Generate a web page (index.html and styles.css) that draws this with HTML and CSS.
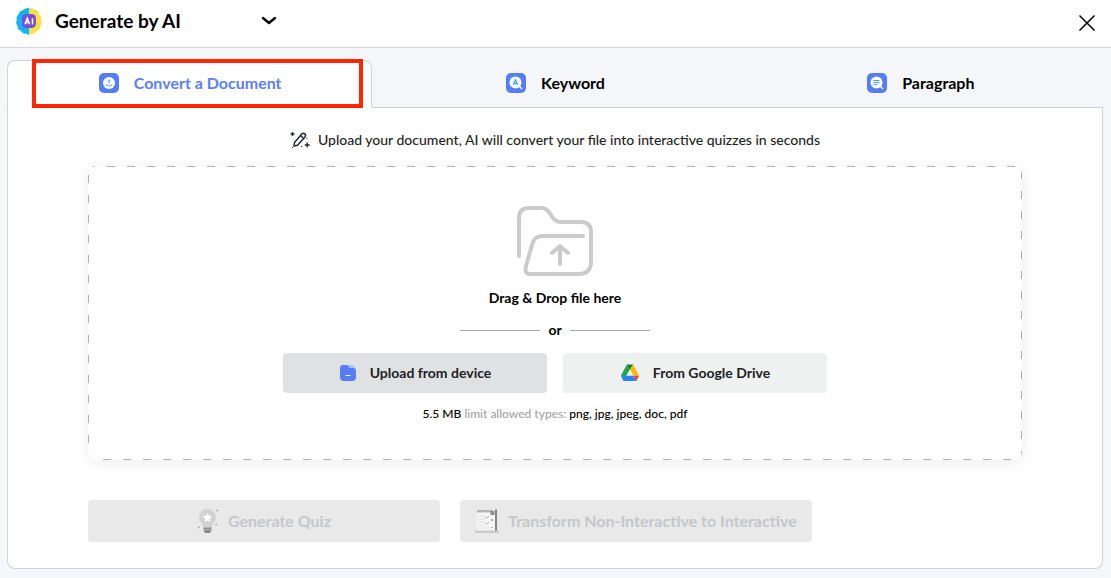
FILE: index.html
```html
<!DOCTYPE html>
<html lang="en">
<head>
<meta charset="utf-8">
<meta name="viewport" content="width=device-width, initial-scale=1">
<title>Generate by AI</title>
<link rel="stylesheet" href="styles.css">
</head>
<body>
<header class="topbar">
  <button class="mode" type="button" aria-haspopup="listbox">
    <svg class="mode-logo" width="28" height="28" viewBox="0 0 28 28" aria-hidden="true">
      <path d="M14 .8 10.500 1.500 8 3 5 4.500 3.500 7.500 1.500 10 1.800 13 1 16l1.500 3 .5 3 3 2 2 2.500 3.500.2L14 28z" fill="#12b5fb"/>
      <path d="m14 .8 3.500.7L20 3l3 1.500L24.500 8l2 2.500-.3 3 .8 3-1.700 3-.8 3.200-3 1.300-2 2.500-3.500.5L14 28z" fill="#fde047"/>
      <path d="M20 3.500 23 5" stroke="#f6b74a"/>
      <rect x="7" y="7" width="14" height="14" rx="4.500" fill="#7650d8"/>
      <path d="m10 17.300 2.300-6 2.300 6M11 15.400h2.700M17.500 11.200v6.200" fill="none" stroke="#fff" stroke-width="1.500"/>
    </svg>
    <span class="mode-name">Generate by AI</span>
    <svg width="16" height="10" viewBox="0 0 16 10" aria-hidden="true"><path d="m2 2 6 5 6-5" fill="none" stroke="#000" stroke-width="2.400" stroke-linecap="round" stroke-linejoin="round"/></svg>
  </button>
  <button class="close" type="button" aria-label="Close">
    <svg width="18" height="18" viewBox="0 0 18 18" aria-hidden="true"><path d="m1.500 1.500 15 15m0-15-15 15" stroke="#000" stroke-width="1.500"/></svg>
  </button>
</header>

<main class="workspace">
  <div class="tabs" role="tablist">
    <button class="tab tab-active" type="button" role="tab" aria-selected="true">
      <svg width="22" height="22" viewBox="0 0 22 22" aria-hidden="true"><rect x="1" y="1" width="20" height="20" rx="5" fill="#557df8"/><circle cx="11" cy="11" r="6" fill="#fff"/><path d="M11 12V7.800M9.200 9.500 11 7.700l1.800 1.800M8.200 12v1.700h5.600V12" fill="none" stroke="#59bdf5"/></svg>
      <span>Convert a Document</span>
    </button>
    <button class="tab" type="button" role="tab" aria-selected="false">
      <svg width="22" height="22" viewBox="0 0 22 22" aria-hidden="true"><rect x="1" y="1" width="20" height="20" rx="5" fill="#557df8"/><circle cx="10.500" cy="10.500" r="6" fill="#fff"/><path d="m14.500 14.500 2.500 2.500" stroke="#fff" stroke-width="1.500"/><path d="m8.300 13 2.200-5.500 2.200 5.500M9.200 11.400h2.600" fill="none" stroke="#3aaaf2" stroke-width="1.200"/></svg>
      <span>Keyword</span>
    </button>
    <button class="tab" type="button" role="tab" aria-selected="false">
      <svg width="22" height="22" viewBox="0 0 22 22" aria-hidden="true"><rect x="1" y="1" width="20" height="20" rx="5" fill="#557df8"/><circle cx="10.500" cy="10.500" r="6" fill="#fff"/><path d="m14.500 14.500 2.500 2.500" stroke="#fff" stroke-width="1.500"/><path d="M7.500 8.500h6M7.500 10.600h6M7.500 12.700h4" stroke="#3aa0f2"/></svg>
      <span>Paragraph</span>
    </button>
    <div class="highlight"></div>
  </div>

  <section class="panel" role="tabpanel">
    <p class="intro">
      <svg width="20" height="18" viewBox="0 0 20 18" fill="none" stroke="#23283d" aria-hidden="true">
        <path d="m4.500 11.500 7.300-8.600q1.500-1.300 3 0t.2 3L7.500 14.200l-3.500.8zM10.500 4.500l3 2.700" stroke-width="1.500" stroke-linejoin="round"/>
        <path d="M2.500 1v4M.5 3h4M17.200 11.500v5M14.700 14h5" stroke-width="1.400"/>
        <path d="M2 16.500h1M11 15.500h1M16.500 7.500h1" stroke-width="1"/>
      </svg>
      <span>Upload your document, AI will convert your file into interactive quizzes in seconds</span>
    </p>

    <div class="dropzone">
      <svg width="80" height="74" viewBox="0 0 80 74" fill="none" stroke="#cbcbcb" stroke-width="4" stroke-linecap="round" stroke-linejoin="round" aria-hidden="true">
        <path d="M4 52V14Q4 4 14 4h12q5 0 8 4l4 6q3 4 8 4h20q10 0 10 10v29q0 13-12 13H15q-6 0-4-8l6-21q2-9 10-9h41"/>
        <path d="M45 60V42m-8 7 8-7 8 7"/>
      </svg>
      <strong class="drop-title">Drag &amp; Drop file here</strong>
      <div class="divider"><span>or</span></div>
      <div class="sources">
        <button class="source source-device" type="button">
          <svg width="18" height="18" viewBox="0 0 18 18" aria-hidden="true"><path d="M8 1h5q3 0 3 4H9z" fill="#a3c9ec"/><path d="M4 1h4l3 3h3q3 0 3 3v6q0 4-4 4H5q-4 0-4-4V4q0-3 3-3z" fill="#557df8"/><path d="M7 11.500h4" stroke="#fff" stroke-linecap="round"/></svg>
          <span>Upload from device</span>
        </button>
        <button class="source source-drive" type="button">
          <svg width="20" height="18" viewBox="0 0 20 18" aria-hidden="true"><path d="M6.800.5 1 11.500l2.500 5L10 5z" fill="#24a44b"/><path d="M6.800.5h6.400L10 6z" fill="#108034"/><path d="M13.200.5 19 11.700h-5.500L10 5z" fill="#ffba00"/><path d="M1 11.700h12.500l3 5.300h-13z" fill="#2684fc"/><path d="M13.500 11.700H19L16.500 17z" fill="#f24435"/></svg>
          <span>From Google Drive</span>
        </button>
      </div>
      <p class="limits">5.5 MB <span class="limits-note">limit allowed types:</span> png, jpg, jpeg, doc, pdf</p>
    </div>

    <div class="actions">
      <button class="action" type="button" disabled>
        <svg width="22" height="26" viewBox="0 0 22 26" aria-hidden="true"><path d="M10.500 1A8.500 8.500 0 0 0 2 9.500c0 4 4 5.500 4.500 10h8c.5-4.500 4.500-6 4.500-10A8.500 8.500 0 0 0 10.500 1z" fill="#d1d2d4"/><path d="M6.500 19h8v3l-1.500 3H8l-1.500-3z" fill="#8c8c8c"/><path d="M6.500 19.500h8M6.500 21.500h8" stroke="#b5b5b5"/><path d="m10.500 5.700 1.200 2.500 2.800.4-2 2 .5 2.800-2.500-1.400L8 13.400l.5-2.800-2-2 2.800-.4z" fill="#fff" stroke="#fff"/><path d="M19.500 2.500H21M18.500 16.500H20M1 19.500h1.500" stroke="#999" stroke-width="1.500"/></svg>
        <span>Generate Quiz</span>
      </button>
      <button class="action" type="button" disabled>
        <svg width="24" height="24" viewBox="0 0 24 24" aria-hidden="true"><path d="M2 1h18v21H2z" fill="#f7f7f7"/><path d="M2 1h16v2.500H2z" fill="#b5b5b5"/><path d="M20 .5h2V22h-2z" fill="#858585"/><path d="M15.500 2h4v4h-4z" fill="#909090"/><path d="M3 7h8M3 10h8M3 13h8M3 16h8M3 19h12" stroke="#dedede"/><path d="m11 8 1 1 2-2m-3 7 1 1 2-2m2-3 2 2m0-2-2 2m0 6.500h1.500" fill="none" stroke="#999" stroke-width=".8"/><path d="M0 21.500h24V24H0z" fill="#cacaca"/></svg>
        <span>Transform Non-Interactive to Interactive</span>
      </button>
    </div>
  </section>
</main>
</body>
</html>
```
FILE: styles.css
```css
* {
  box-sizing: border-box;
}

body {
  margin: 0;
  min-height: 100vh;
  background: #f5f6f9;
  color: #000;
  font-family: Lato, "Open Sans", sans-serif;
}

button {
  border: 0;
  padding: 0;
  background: none;
  color: inherit;
  font: inherit;
  cursor: pointer;
}

svg {
  flex: none;
}

.topbar {
  display: flex;
  align-items: center;
  justify-content: space-between;
  height: 48px;
  padding: 0 15px 2px;
  border-bottom: 1px solid #d2d3dc;
  background: #fff;
}

.mode {
  display: flex;
  align-items: center;
  padding-bottom: 4px;
}

.mode-name {
  min-width: 206px;
  margin-left: 12px;
  font-size: 19px;
  font-weight: 700;
  line-height: 24px;
  text-align: left;
}

.close {
  display: flex;
}

.workspace {
  padding: 12px 8px 9px 7px;
}

.tabs {
  position: relative;
  display: grid;
  grid-template-columns: repeat(3, 1fr);
  height: 48px;
}

.tab {
  display: flex;
  align-items: center;
  justify-content: center;
  gap: 14px;
  padding-bottom: 2px;
  border-bottom: 1px solid #cdd1d8;
  font-size: 16px;
  font-weight: 700;
  line-height: 24px;
}

.tab-active {
  border: 1px solid #cdd1d8;
  border-bottom-color: #fff;
  border-radius: 8px 8px 0 0;
  background: #fff;
  color: #5b80f7;
}

.highlight {
  position: absolute;
  top: -1px;
  left: 25px;
  width: 331px;
  height: 49px;
  border: 4px solid #ff2600;
  pointer-events: none;
}

.panel {
  padding: 20px 80px 26px;
  border: 1px solid #cdd1d8;
  border-top: 0;
  border-radius: 0 0 8px 8px;
  background: #fff;
}

.intro {
  display: flex;
  align-items: center;
  justify-content: center;
  gap: 8px;
  margin: 0 0 14px;
  color: #1f1f24;
  font-size: 14px;
  font-weight: 500;
  line-height: 24px;
}

.dropzone {
  --dash: #b0b0b0 0 8px, transparent 8px 20px;
  display: flex;
  flex-direction: column;
  align-items: center;
  padding: 38px 16px 37px;
  border-radius: 8px;
  background:
    repeating-linear-gradient(90deg, var(--dash)) -1px 0 / calc(100% + 20px) 1px no-repeat,
    repeating-linear-gradient(90deg, var(--dash)) -5px 100% / calc(100% + 20px) 1px no-repeat,
    repeating-linear-gradient(180deg, var(--dash)) 0 -11px / 1px calc(100% + 20px) no-repeat,
    repeating-linear-gradient(180deg, var(--dash)) 100% -15px / 1px calc(100% + 20px) no-repeat,
    #fff;
  box-shadow: 0 2px 16px rgba(0, 0, 0, 0.08);
}

.drop-title {
  margin-top: 10px;
  font-size: 14px;
  line-height: 20px;
}

.divider {
  display: flex;
  align-items: center;
  gap: 8px;
  width: 190px;
  margin: 12px 0 13px;
  font-size: 14px;
  font-weight: 700;
  line-height: 20px;
}

.divider::before,
.divider::after {
  content: "";
  flex: 1;
  height: 1px;
  background: #a6a6a6;
}

.sources {
  display: flex;
  gap: 16px;
}

.source {
  display: flex;
  align-items: center;
  justify-content: center;
  gap: 13px;
  width: 264px;
  height: 40px;
  border-radius: 4px;
  color: #202124;
  font-size: 14px;
  font-weight: 700;
  line-height: 20px;
}

.source-device {
  background: #e0e1e3;
}

.source-drive {
  background: #eff1f1;
}

.limits {
  margin: 12px 0 0;
  font-size: 12px;
  font-weight: 500;
  line-height: 18px;
}

.limits-note {
  color: #a3a3a3;
}

.actions {
  display: flex;
  gap: 20px;
  margin-top: 40px;
}

.action {
  display: flex;
  align-items: center;
  justify-content: center;
  gap: 9px;
  width: 352px;
  height: 42px;
  border-radius: 4px;
  background: #e9e9e9;
  color: #c5c7ca;
  font-size: 16px;
  font-weight: 700;
  line-height: 24px;
  cursor: default;
}
```
